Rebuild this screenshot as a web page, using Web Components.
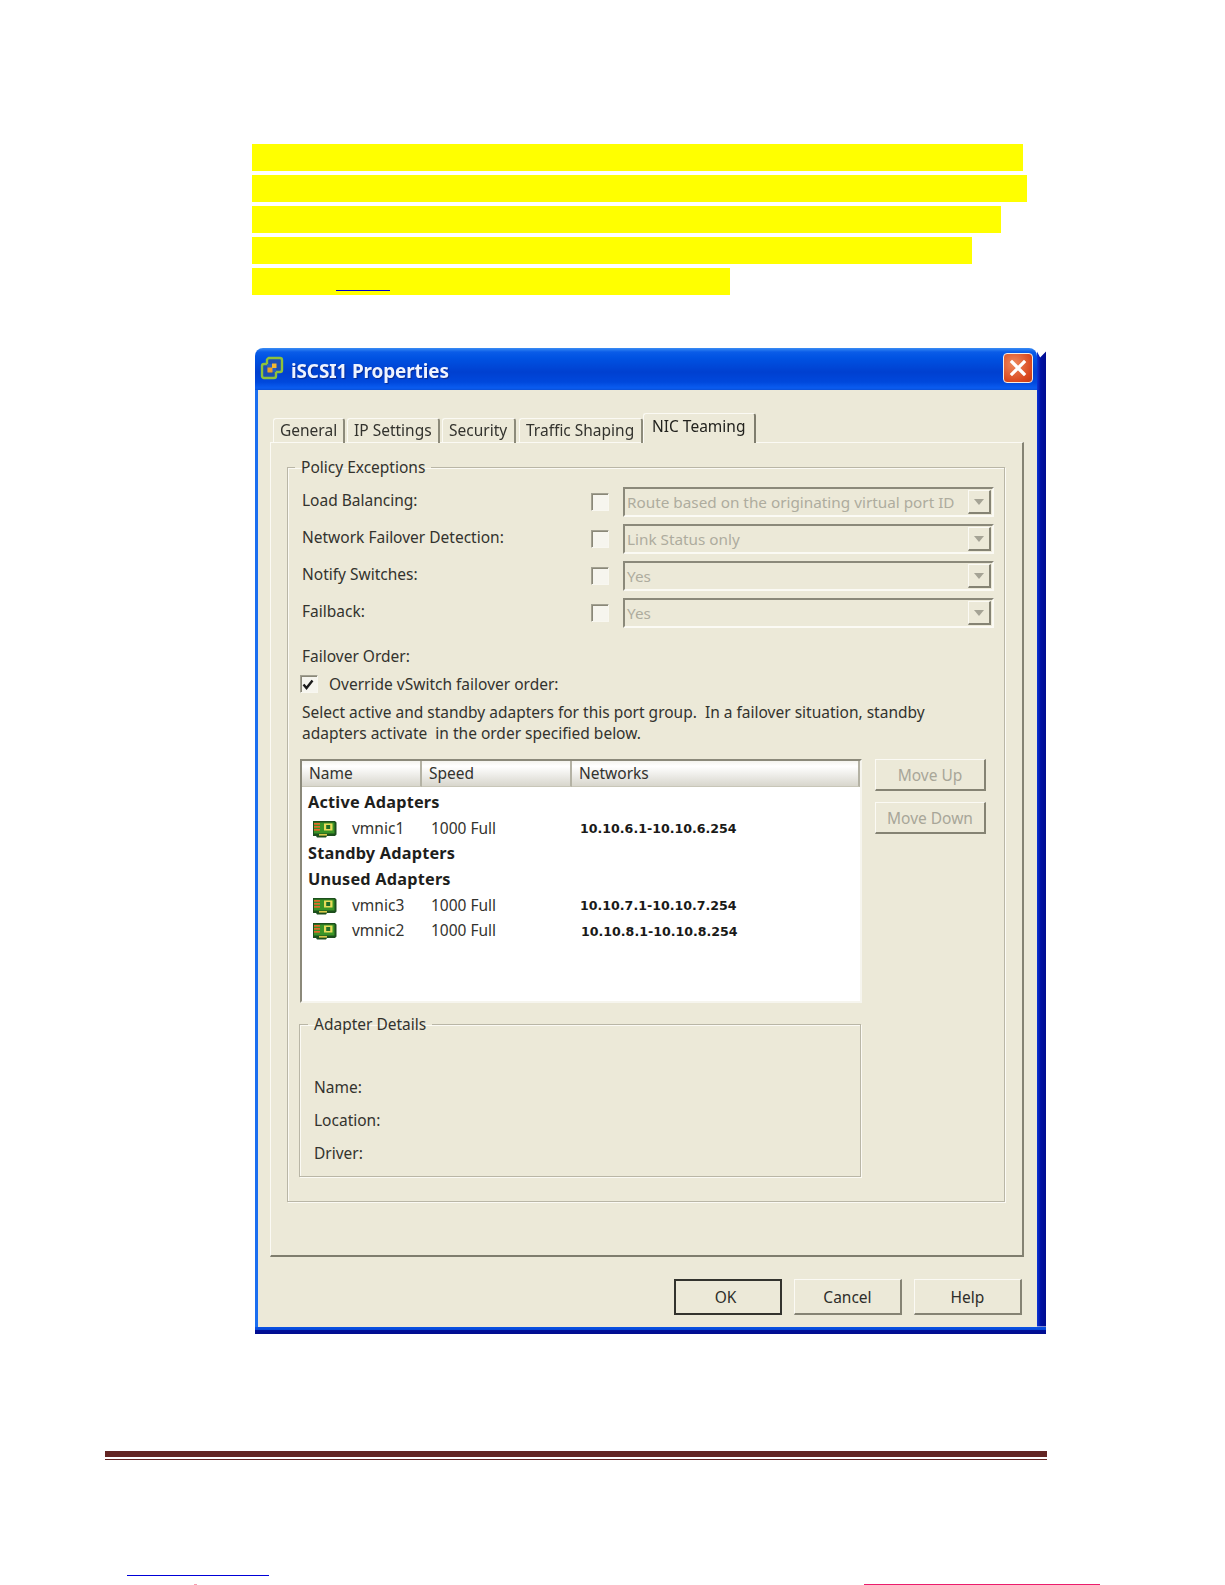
<!DOCTYPE html>
<html><head><meta charset="utf-8">
<style>
html,body{margin:0;padding:0;background:#fff}
body{font-family:"Noto Sans",sans-serif;width:1225px;height:1585px;overflow:hidden}
</style></head><body>
<x-page>
  <x-highlight slot="top"></x-highlight>
  <x-dialog slot="main" heading="iSCSI1 Properties">
    <x-fieldset legend="Policy Exceptions" class="outer">
      <x-policy class="first" label="Load Balancing:" value="Route based on the originating virtual port ID"></x-policy>
      <x-policy label="Network Failover Detection:" value="Link Status only"></x-policy>
      <x-policy label="Notify Switches:" value="Yes"></x-policy>
      <x-policy label="Failback:" value="Yes"></x-policy>
      <x-failover></x-failover>
    </x-fieldset>
  </x-dialog>
  <x-footer slot="foot"></x-footer>
</x-page>
<script>
const def=(name,html,init)=>customElements.define(name,class extends HTMLElement{
  constructor(){super();const r=this.attachShadow({mode:'open'});r.innerHTML=typeof html==='function'?html(this):html;}
  connectedCallback(){if(init&&!this._i){this._i=1;init(this,this.shadowRoot)}}
});
const NIC=`<svg width="25" height="18" viewBox="0 0 25 18"><path d="M1 1h22l1.500 1.500v12l-1.500 1.500h-8l-1 1.500h-9l-1-1.500h-3z" fill="#1c4f1c"/><rect x="2" y="2.500" width="20.500" height="11" fill="#3a9426"/><rect x="2" y="3" width="6" height="1.700" fill="#e2682a"/><rect x="2" y="6" width="6" height="1.700" fill="#e2682a"/><rect x="2" y="9" width="6" height="1.700" fill="#e2682a"/><rect x="12" y="3.500" width="8.500" height="7" fill="#e7dc5a"/><rect x="14.200" y="5" width="4" height="4" fill="#1e6b26"/><rect x="7" y="14" width="8" height="1.600" fill="#d9c84a"/></svg>`;
def('x-page',`<style>
:host{display:flex;flex-direction:column;width:1225px;height:1585px;padding-top:144px;box-sizing:border-box}
.top{display:block;margin-left:252px}
.main{display:block;margin:53px 0 0 255px}
.foot{display:block;margin-top:117px}
</style><div class="top"><slot name="top"></slot></div><div class="main"><slot name="main"></slot></div><div class="foot"><slot name="foot"></slot></div>`);
def('x-highlight',`<style>
:host{display:flex;flex-direction:column;gap:4px}
div{height:27px;background:#ff0}
.l{display:flex;height:26.500px}
u{display:block;width:54px;height:1.500px;margin:21.500px 0 0 84px;background:#0000d0}
</style><div style="width:771px"></div><div style="width:775px"></div><div style="width:749px"></div><div style="width:720px"></div><div class="l" style="width:478px"><u></u></div>`);
def('x-dialog',el=>`<style>
:host{display:flex;flex-direction:column;width:791px;height:986px;box-sizing:border-box;filter:blur(.55px);color:#33332e;font:15.500px/20px "Noto Sans",sans-serif}
.up{flex:1;display:flex;min-height:0}
.win{flex:1;min-width:0;display:flex;flex-direction:column;border-radius:8px 8px 0 0;overflow:hidden}
.strip{width:9px;flex:none;background:linear-gradient(90deg,#0a34d8,#0012a4 40%,#000c90);clip-path:polygon(0 4px,35% 10px,100% 4px,100% 100%,0 100%)}
.bot{height:7px;flex:none;background:linear-gradient(#0a52e4 0,#0848d8 40%,#000f98 45%,#000c90)}
.bar{height:42px;flex:none;display:flex;align-items:center;padding-left:5px;box-sizing:border-box;background:linear-gradient(#3a8cf4 0,#0a5ce8 4px,#0052e2 10px,#0040d0 24px,#0048dc 34px,#0a5cf0 40px,#0a50d8 42px)}
.ico{margin:-2px 7px 0 0;flex:none}
.t{font-weight:700;font-size:18.900px;color:#eef3ff;text-shadow:1px 1px 1px #0a2a90;flex:1;padding-top:4px;letter-spacing:-.1px}
.close{width:30px;height:30px;margin-right:4px;margin-bottom:2px;flex:none;box-sizing:border-box;border:1.500px solid #f4ece4;border-radius:4px;background:radial-gradient(circle at 35% 35%,#ee8a5e,#d9481f 70%,#c23a12);display:flex;align-items:center;justify-content:center}
.body{flex:1;display:flex;flex-direction:column;background:#ece9d8;border-left:3px solid #1a6ef0;padding:24px 13px 10px 12px}
.tabs{display:flex;margin-left:3px;height:29px;align-items:flex-end;position:relative;z-index:1;margin-bottom:-1px}
.tab{height:25px;box-sizing:border-box;border-top:1.500px solid #fbfaf4;border-left:1.500px solid #fbfaf4;border-right:2px solid #8c8a7a;border-radius:3px 3px 0 0;padding:1px 0 0 6px;margin-right:2px;white-space:nowrap}
.tab.a{height:30px;padding:2px 0 0 8px;margin:0;background:#ece9d8;color:#22221e;border-right:2.500px solid #7f7d6e}
.panel{height:815.500px;flex:none;box-sizing:border-box;border:1.500px solid #fbfaf4;border-right:2px solid #858373;border-bottom:2px solid #7f7d6e;padding:14.500px 17px 0 16px}
.btns{display:flex;justify-content:flex-end;gap:12px;margin-top:22px;padding-right:2px}
</style><div class="up"><div class="win"><div class="bar">
<svg class="ico" width="24" height="24" viewBox="0 0 24 24"><path d="M8.500 2H20a2 2 0 0 1 2 2v10a2 2 0 0 1-2 2h-4v4a2 2 0 0 1-2 2H4a2 2 0 0 1-2-2V10a2 2 0 0 1 2-2h3V3.500z" fill="#1d4fb4" stroke="#8fc23a" stroke-width="2.400" stroke-linejoin="round"/><path d="M7 8h9v8H7z" fill="#2b60c0"/><rect x="7.500" y="11.500" width="5" height="5" fill="#f0a020"/><rect x="12" y="7.500" width="4.500" height="4.500" fill="#f4b830"/></svg>
<span class="t">${el.getAttribute('heading')}</span>
<span class="close"><svg width="20" height="20" viewBox="0 0 20 20"><path d="M4 4l12 12M16 4L4 16" stroke="#fff" stroke-width="3.200" stroke-linecap="square"/></svg></span></div>
<div class="body"><div class="tabs"><span class="tab" style="width:72px">General</span><span class="tab" style="width:93px">IP Settings</span><span class="tab" style="width:74px;margin-right:3px">Security</span><span class="tab" style="width:124px;margin:0">Traffic Shaping</span><span class="tab a" style="width:113px">NIC Teaming</span></div>
<div class="panel"><slot></slot></div>
<div class="btns"><x-btn w="108" h="36" def>OK</x-btn><x-btn w="108" h="36">Cancel</x-btn><x-btn w="108" h="36">Help</x-btn></div></div></div><div class="strip"></div></div><div class="bot"></div>`);
def('x-btn',el=>`<style>
:host{width:${el.getAttribute('w')}px;height:${el.getAttribute('h')}px;box-sizing:border-box;display:flex;align-items:center;justify-content:center;border:1.500px solid #fbfaf4;border-right:2px solid #858373;border-bottom:2px solid #858373;color:${el.hasAttribute('disabled')?'#a8a698':'#2e2e2a'}}
:host([def]){border:2px solid #33332e;padding-right:5px}
</style><slot></slot>`);
def('x-fieldset',el=>`<style>
:host{display:block}
fieldset{margin:0;padding:0;min-width:0;border:1px solid #b9b6a6;box-shadow:inset 1px 1px 0 #fbfaf4,1px 1px 0 #fbfaf4;height:var(--h,745px);box-sizing:border-box}
legend{margin-left:var(--lx,7px);padding:0 6px;height:20px;line-height:20px}
</style><fieldset><legend>${el.getAttribute('legend')}</legend><slot></slot></fieldset>`);
def('x-check',`<style>
:host{display:block;width:18px;height:18px;box-sizing:border-box;background:#f6f5ee;border:1.500px solid #a3a192;border-right-color:#f8f7f0;border-bottom-color:#f8f7f0;box-shadow:inset 1px 1px 0 #8a8878}
svg{display:block;margin:1px}
</style><slot></slot>`);
def('x-policy',el=>`<style>
:host{display:grid;grid-template-columns:275px 18px 371px;column-gap:14px;align-items:center;height:30px;margin:0 0 7px 14px}
:host(.first){margin-top:10px}
.v{box-sizing:border-box;height:30px;display:flex;align-items:center;justify-content:space-between;padding:0 0 0 2px;border:2.500px solid #8b897a;border-right-color:#fbfaf4;border-bottom-color:#fbfaf4;color:#aeac9e;white-space:nowrap;overflow:hidden;font-size:15.300px}
.l{padding-bottom:4px;white-space:nowrap}
.d{width:23px;height:24px;box-sizing:border-box;flex:none;margin-right:1px;border:1.500px solid #fbfaf4;border-right:2px solid #858373;border-bottom:2px solid #858373;display:flex;align-items:center;justify-content:center}
.d i{border:5.500px solid transparent;border-top:6px solid #a5a395;border-bottom:0}
</style><span class="l">${el.getAttribute('label')}</span><x-check></x-check><div class="v"><span>${el.getAttribute('value')}</span><span class="d"><i></i></span></div>`);
def('x-failover',`<style>
:host{display:block;margin:18px 0 0 0;padding-left:14px}
.fo{height:20px;margin-top:9px}
.ov{display:flex;align-items:center;gap:11px;height:18px;margin:9px 0 0 -2px}
.tx{line-height:20.500px;margin-top:9px;white-space:pre}
.row{display:flex;gap:13px;margin:16px 0 0 -2px;align-items:flex-start}
.side{display:flex;flex-direction:column;gap:11px}
.det{display:block;margin:11px 0 0 -3px;width:562px;--h:163px;--lx:8px}
.dl{padding:37px 0 0 14px;line-height:33px}
</style>
<div class="fo">Failover Order:</div>
<div class="ov"><x-check><svg width="14" height="14" viewBox="0 0 14 14"><path d="M2.500 6.500l3 3.500 6-7.500" fill="none" stroke="#1c1c1c" stroke-width="2.400"/></svg></x-check><span>Override vSwitch failover order:</span></div>
<div class="tx">Select active and standby adapters for this port group.  In a failover situation, standby
adapters activate  in the order specified below.</div>
<div class="row"><x-list></x-list><div class="side"><x-btn w="111" h="32" disabled>Move Up</x-btn><x-btn w="111" h="32" disabled>Move Down</x-btn></div></div>
<x-fieldset class="det" legend="Adapter Details"><div class="dl">Name:<br>Location:<br>Driver:</div></x-fieldset>`);
def('x-list',`<style>
:host{display:block;width:562px;height:244px;box-sizing:border-box;background:#fff;border:2.500px solid #8b897a;border-right:2px solid #f6f5ee;border-bottom:2px solid #f6f5ee;line-height:25.700px;color:#33332e}
.h{display:grid;grid-template-columns:120px 150px 1fr;height:26px;line-height:24px;background:linear-gradient(#f4f3ee,#fff 20%,#d6d4ca)}
.h span{padding-left:7px;border-right:2px solid #b4b2a4;border-bottom:1px solid #c8c6b8;box-sizing:border-box}
.b{padding-top:3px}
.g{font-weight:700;font-size:16.300px;padding-left:6px;color:#1e1e1c;letter-spacing:.2px}
.r{display:grid;grid-template-columns:40px 79px 149px 1fr;align-items:center;height:25.700px;padding-left:10px}
.r svg{display:block}
.n{font:700 12.600px "DejaVu Sans",sans-serif;color:#1a1a18;white-space:nowrap}
</style><div class="h"><span>Name</span><span>Speed</span><span>Networks</span></div>
<div class="b"><div class="g">Active Adapters</div>
<div class="r">${NIC}<span>vmnic1</span><span>1000 Full</span><span class="n">10.10.6.1-10.10.6.254</span></div>
<div class="g">Standby Adapters</div>
<div class="g">Unused Adapters</div>
<div class="r">${NIC}<span>vmnic3</span><span>1000 Full</span><span class="n">10.10.7.1-10.10.7.254</span></div>
<div class="r">${NIC}<span>vmnic2</span><span>1000 Full</span><span class="n" style="margin-left:1px">10.10.8.1-10.10.8.254</span></div></div>`);
def('x-footer',`<style>
:host{display:block}
.a{height:6px;margin-left:105px;width:942px;background:#632523}
.b{height:1.500px;margin:2px 0 0 105px;width:942px;background:#632523}
.c{height:1px;margin:115px 0 0 127px;width:142px;background:#0000d8}
.d{display:flex;height:1px;margin-top:8px}
.d i{display:block;height:1px}
</style><div class="a"></div><div class="b"></div><div class="c"></div><div class="d"><i style="margin-left:194px;width:3px;background:#f4a0b0"></i><i style="margin-left:667px;width:236px;background:#ec1c6c"></i></div>`);
</script>
</body></html>
